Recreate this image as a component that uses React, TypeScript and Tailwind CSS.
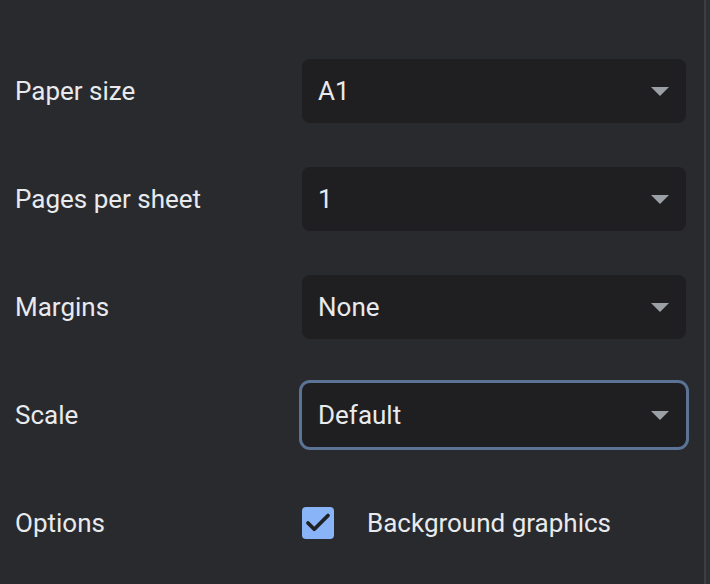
import { Check } from "lucide-react";

const rows = [
    { label: "Paper size", value: "A1" },
    { label: "Pages per sheet", value: "1" },
    { label: "Margins", value: "None" },
    { label: "Scale", value: "Default", focused: true },
];

function Select({ value, focused }: { value: string; focused?: boolean }) {
    return (
        <div
            className={
                "flex items-center justify-between h-16 w-[384px] pl-4 pr-[17px] rounded-lg bg-[#1f1f21] text-[26px] text-[#e8eaed]" +
                (focused ? " ring-3 ring-[#5b7395]" : "")
            }
        >
            <span>{value}</span>
            <svg width="18" height="9" viewBox="0 0 18 9">
                <path d="M0 0h18L9 9z" fill="#9aa0a6" />
            </svg>
        </div>
    );
}

export default function App() {
    return (
        <div className="flex w-[710px] h-[584px] bg-[#292a2d] font-['Roboto',sans-serif] text-[#e8eaed]">
            <div className="flex-1 flex flex-col gap-11 pt-[59px] pl-[15px]">
                {rows.map((r) => (
                    <div key={r.label} className="flex items-center h-16">
                        <span className="w-[287px] text-[26px]">{r.label}</span>
                        <Select value={r.value} focused={r.focused} />
                    </div>
                ))}
                <div className="flex items-center h-16">
                    <span className="w-[287px] text-[26px]">Options</span>
                    <div className="flex items-center gap-[33px]">
                        <div className="flex items-center justify-center w-8 h-8 rounded-[4px] bg-[#8ab4f8]">
                            <Check size={30} strokeWidth={3} color="#202124" />
                        </div>
                        <span className="text-[26px]">Background graphics</span>
                    </div>
                </div>
            </div>
            <div className="w-[2px] bg-[#3d3e42]" />
            <div className="w-[4px] bg-[#2e2f32]" />
        </div>
    );
}
